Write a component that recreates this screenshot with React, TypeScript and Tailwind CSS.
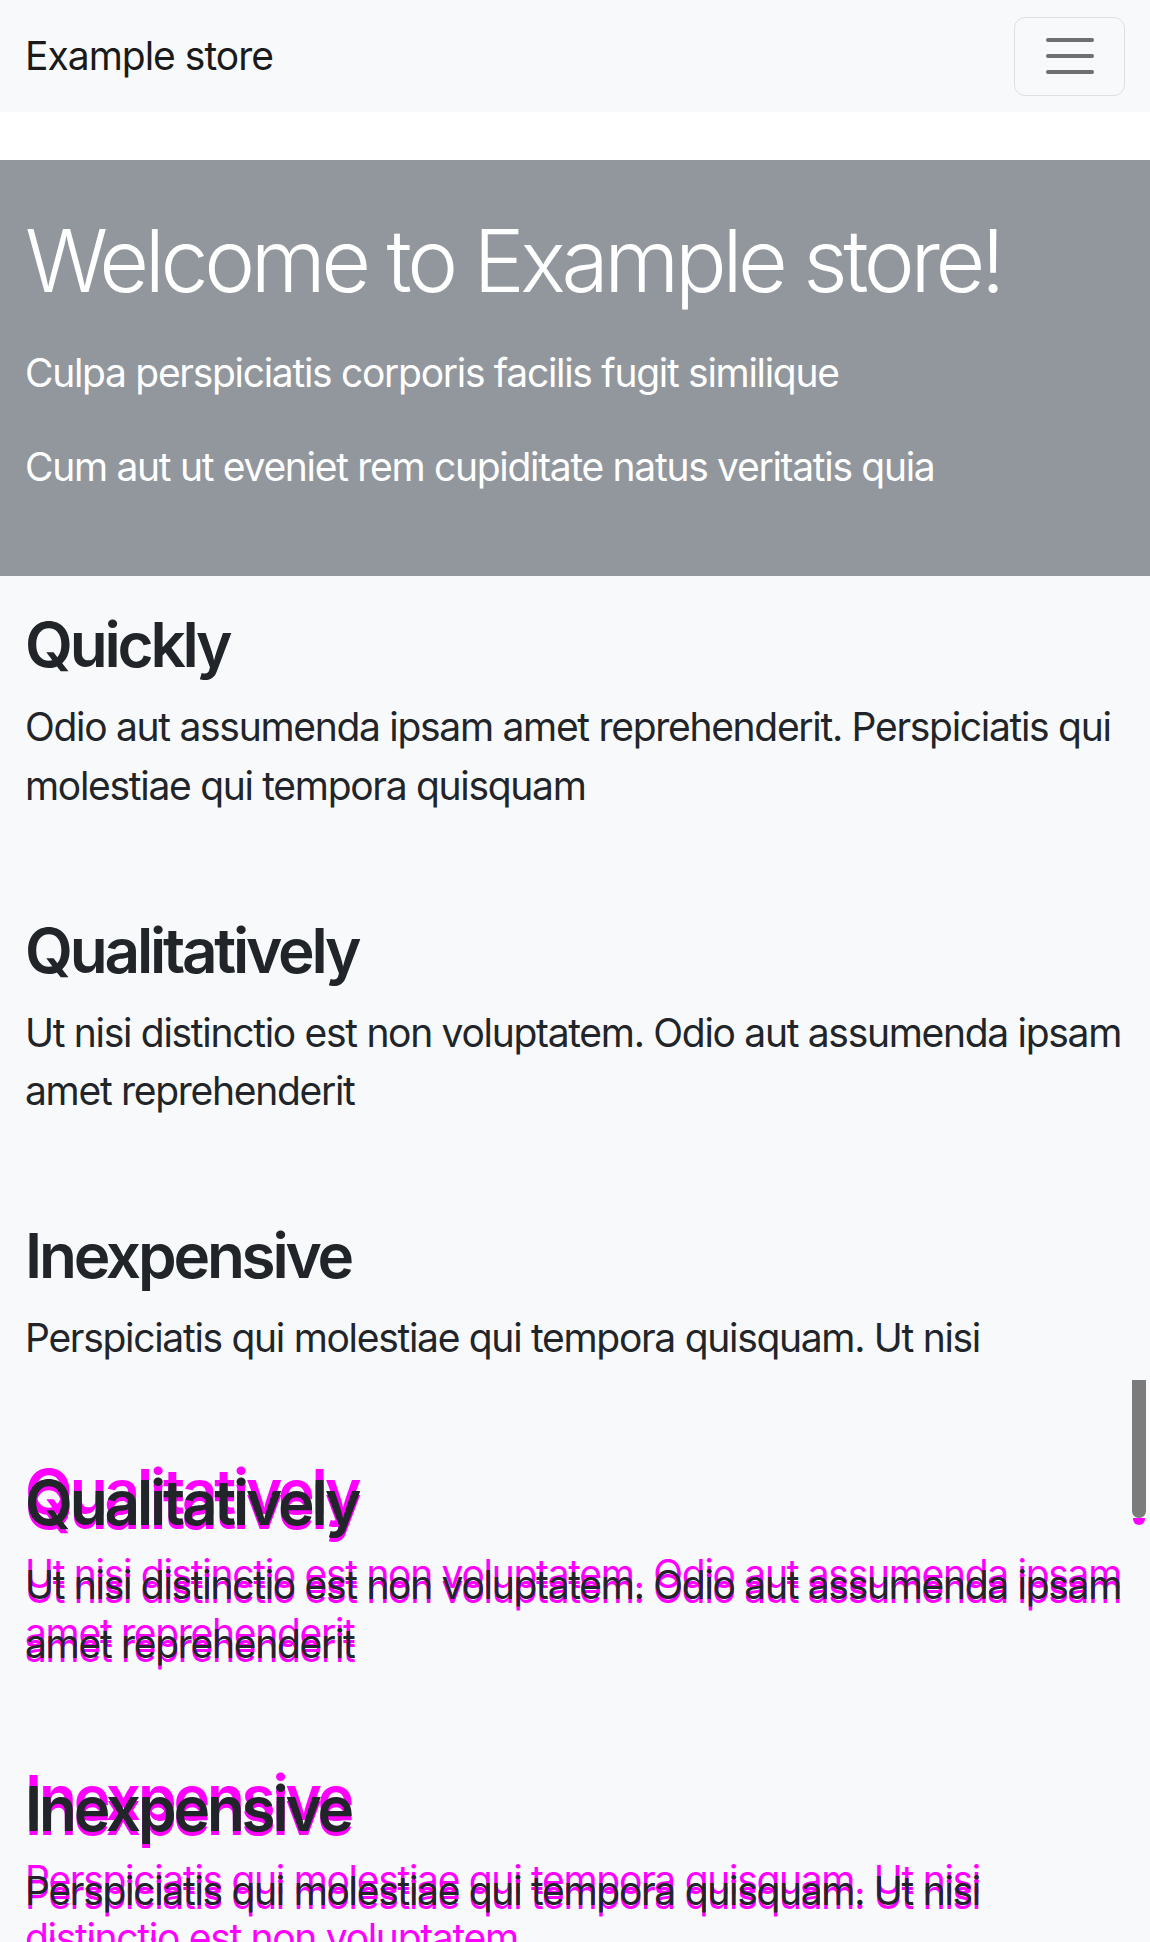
import React from "react";

const P1 = "Odio aut assumenda ipsam amet reprehenderit. Perspiciatis qui molestiae qui tempora quisquam";
const P2 = "Ut nisi distinctio est non voluptatem. Odio aut assumenda ipsam amet reprehenderit";
const P3 = "Perspiciatis qui molestiae qui tempora quisquam. Ut nisi";
const P3M = "Perspiciatis qui molestiae qui tempora quisquam. Ut nisi distinctio est non voluptatem.";

function Section({ title, text, color }: { title: string; text: string; color: string }) {
  return (
    <section className="pb-[98.5px]">
      <h2 className={`text-[62px] leading-[74px] font-semibold tracking-[-3.2px] ${color}`}>{title}</h2>
      <p className={`mt-[16px] text-[39px] leading-[58.5px] tracking-[-1.3px] ${color}`}>{text}</p>
    </section>
  );
}

export default function App() {
  return (
    <div
      className="relative min-h-[1942px] h-[1942px] overflow-hidden bg-[#f8f9fa] text-[#212529]"
      style={{ fontFamily: "Inter, 'Noto Sans', sans-serif" }}
    >
      {/* Navbar */}
      <nav className="flex h-[112px] items-center justify-between bg-[#f8f9fa] pl-[25px] pr-[25px]">
        <span className="text-[39px] leading-[58.5px] text-[#1a1a1a] tracking-[-1px]">Example store</span>
        <button className="flex h-[79px] w-[111px] flex-col items-center justify-center gap-[12.5px] rounded-[11px] border-[1.5px] border-[#dedfe0]">
          <span className="block h-[3.5px] w-[48px] rounded-full bg-[#6f7071]" />
          <span className="block h-[3.5px] w-[48px] rounded-full bg-[#6f7071]" />
          <span className="block h-[3.5px] w-[48px] rounded-full bg-[#6f7071]" />
        </button>
      </nav>

      {/* gap */}
      <div className="h-[48px] bg-white" />

      {/* Hero */}
      <header className="h-[416px] bg-[#92979e] px-[25px] pt-[50px] text-white">
        <h1 className="text-[86px] font-light leading-[103px] tracking-[-4.4px]">Welcome to Example store!</h1>
        <p className="mt-[31px] text-[39px] leading-[58.5px] tracking-[-1.3px]">Culpa perspiciatis corporis facilis fugit similique</p>
        <p className="mt-[35px] text-[39px] leading-[58.5px] tracking-[-1.3px]">Cum aut ut eveniet rem cupiditate natus veritatis quia</p>
      </header>

      {/* Content */}
      <main className="px-[25px] pt-[32px]">
        <Section title="Quickly" text={P1} color="text-[#212529]" />
        <Section title="Qualitatively" text={P2} color="text-[#212529]" />
        <Section title="Inexpensive" text={P3} color="text-[#212529]" />
        <div className="relative">
          <div className="absolute inset-x-0 top-[-11px]">
            <Section title="Qualitatively" text={P2} color="text-[#ff00ff]" />
            <Section title="Inexpensive" text={P3M} color="text-[#ff00ff]" />
          </div>
          <div className="absolute inset-x-0 top-[4px]">
            <Section title="Qualitatively" text={P2} color="text-[#ff00ff]" />
            <Section title="Inexpensive" text={P3M} color="text-[#ff00ff]" />
          </div>
          <div className="relative z-10">
            <Section title="Qualitatively" text={P2} color="text-[#212529]" />
            <Section title="Inexpensive" text={P3} color="text-[#212529]" />
          </div>
        </div>
      </main>

      {/* scrollbar overlay */}
      <div className="absolute left-[1132px] top-[1380px] z-20 flex w-[14px] flex-col items-center">
        <div className="h-[138px] w-[14px] rounded-b-[7px] bg-[#7b7b7b]" />
        <div className="h-[7px] w-[12px] rounded-b-full bg-[#ff00ff]" />
      </div>
    </div>
  );
}
